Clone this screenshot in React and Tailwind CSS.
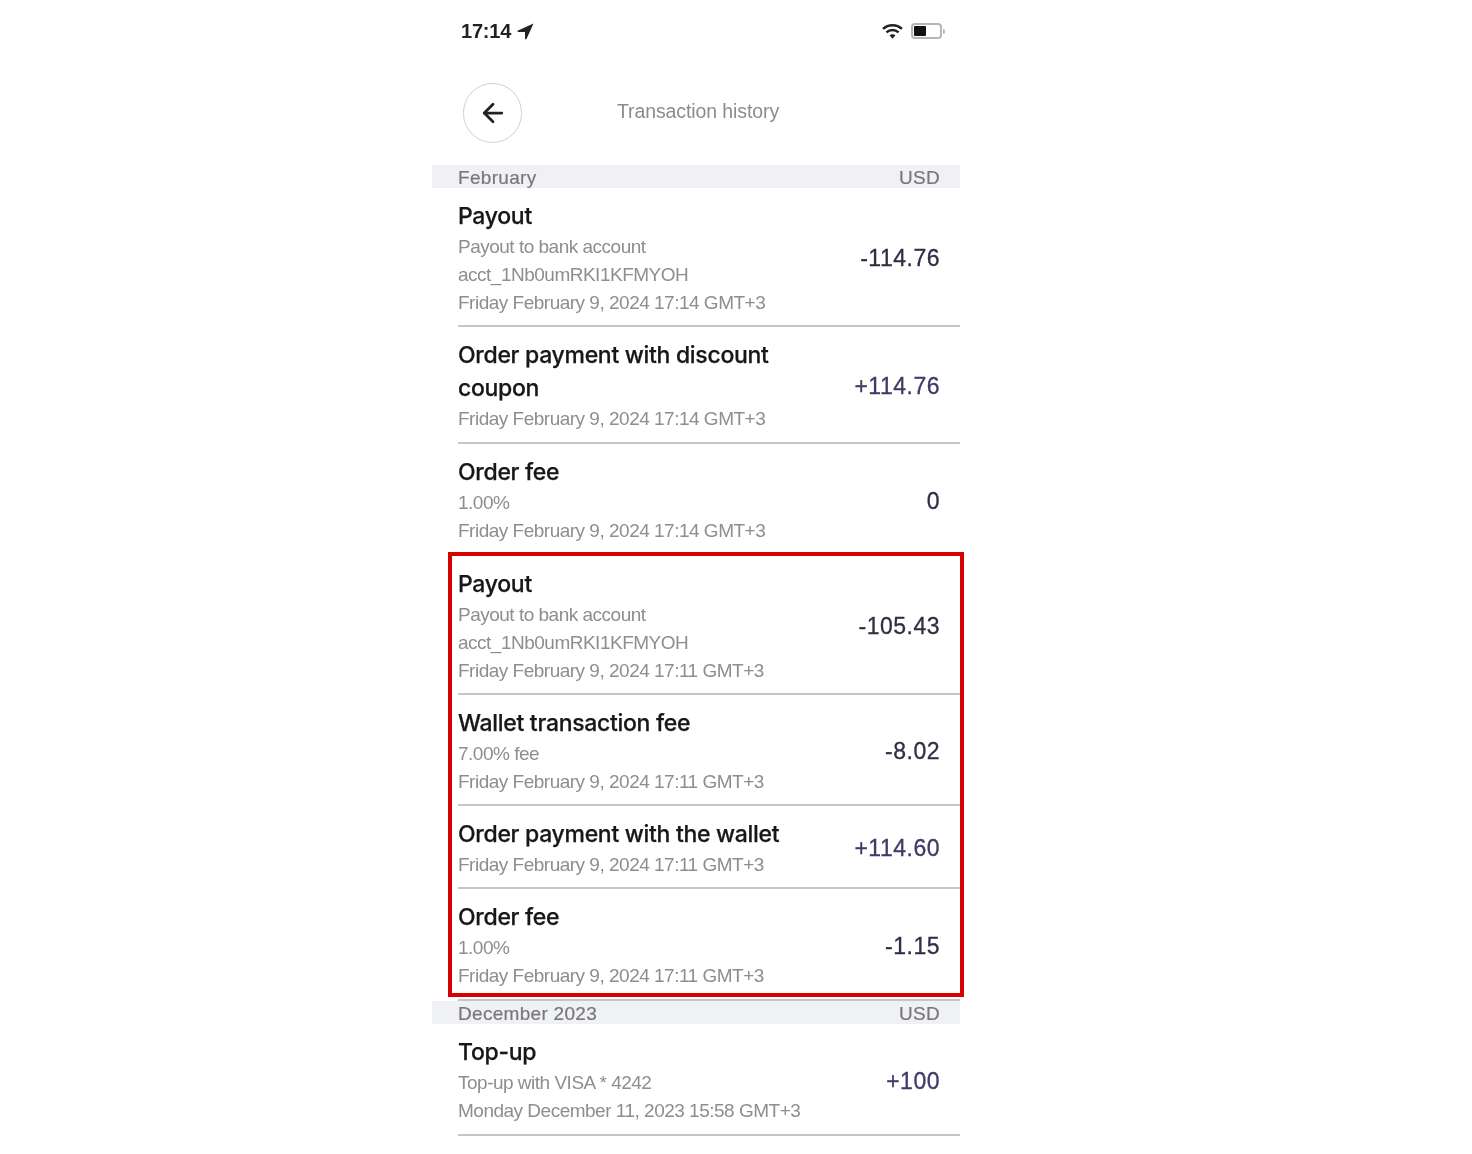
import React from 'react';
import { ArrowLeft } from 'lucide-react';

const Row = ({ height, title, lines, amount, positive }) => (
  <div className={`pl-[26px] ${height}`}>
    <div className="h-full flex items-center pr-5 border-b-2 border-[#c6c6c9]">
      <div className="flex-1 pt-[12px] self-start">
        <div className="text-[23px] leading-[33px] font-medium text-[#17171a] tracking-[-0.3px] max-w-[330px] [-webkit-text-stroke:0.25px]" style={{ fontFamily: 'Inter, sans-serif' }}>{title}</div>
        {lines.map((line) => (
          <div key={line} className="text-[19px] leading-[28px] text-[#8d8d92] tracking-[-0.5px]">{line}</div>
        ))}
      </div>
      <div className={`text-[23px] pt-[4px] tracking-[0.5px] [-webkit-text-stroke:0.3px] ${positive ? 'text-[#3f3a66]' : 'text-[#2f2e45]'}`}>{amount}</div>
    </div>
  </div>
);

const Band = ({ label }) => (
  <div className="h-[23px] bg-[#f0f1f5] flex items-center justify-between pl-[26px] pr-5 pt-[3px] text-[19px] text-[#77777d] tracking-[0.3px] [-webkit-text-stroke:0.2px]">
    <span>{label}</span>
    <span>USD</span>
  </div>
);

export default function App() {
  return (
    <div className="min-h-[1154px] bg-white pl-[432px]" style={{ fontFamily: '"Liberation Sans", sans-serif' }}>
      <div className="relative w-[528px]">
        <div className="blur-[0.5px]">
          <div className="h-[62px] flex items-center justify-between pl-[29px] pr-[15px]">
            <div className="flex items-center gap-[6px] text-[20px] font-semibold text-[#222] tracking-[-0.2px]">
              17:14
              <svg width="17" height="17" viewBox="0 0 17 17" className="text-[#222]">
                <path d="M16.5 0.5 L0.5 7.8 Q0 9 1.5 9 L8 9 L8 15.5 Q8.5 17 9.5 16 Z" fill="currentColor" />
              </svg>
            </div>
            <div className="flex items-center gap-[8px]">
              <svg width="21" height="16" viewBox="0 0 20 15" fill="none" stroke="#222" strokeWidth="2.4">
                <path d="M1 5.5 C6 0.8 14 0.8 19 5.5" />
                <path d="M4.2 8.8 C7.6 5.8 12.4 5.8 15.8 8.8" />
                <path d="M10 14.8 L7.2 11.6 C8.8 10.4 11.2 10.4 12.8 11.6 Z" fill="#222" stroke="none" />
              </svg>
              <div className="flex items-center">
                <div className="w-[31px] h-[16px] rounded-[4px] border-2 border-[#b5b5b8] p-[1px]">
                  <div className="w-[12px] h-full bg-[#111] rounded-[1px]" />
                </div>
                <div className="w-[2px] h-[5px] bg-[#b5b5b8] ml-[1px] rounded-r-sm" />
              </div>
            </div>
          </div>

          <div className="h-[103px] relative flex items-start pl-[31px] pt-[21px]">
            <div className="w-[59px] h-[60px] rounded-full border border-[#cfcfcf] flex items-center justify-center text-[#222]">
              <ArrowLeft size={30} strokeWidth={2.2} />
            </div>
            <div className="absolute left-0 right-[-4px] top-[35px] text-center text-[19.5px] leading-[28px] text-[#8c8c90] tracking-[-0.1px]">Transaction history</div>
          </div>

          <Band label="February" />
          <Row height="h-[139px]" title="Payout" lines={['Payout to bank account', 'acct_1Nb0umRKI1KFMYOH', 'Friday February 9, 2024 17:14 GMT+3']} amount="-114.76" />
          <Row height="h-[117px]" title="Order payment with discount coupon" lines={['Friday February 9, 2024 17:14 GMT+3']} amount="+114.76" positive />
          <Row height="h-[112px]" title="Order fee" lines={['1.00%', 'Friday February 9, 2024 17:14 GMT+3']} amount="0" />
          <Row height="h-[139px]" title="Payout" lines={['Payout to bank account', 'acct_1Nb0umRKI1KFMYOH', 'Friday February 9, 2024 17:11 GMT+3']} amount="-105.43" />
          <Row height="h-[111px]" title="Wallet transaction fee" lines={['7.00% fee', 'Friday February 9, 2024 17:11 GMT+3']} amount="-8.02" />
          <Row height="h-[83px]" title="Order payment with the wallet" lines={['Friday February 9, 2024 17:11 GMT+3']} amount="+114.60" positive />
          <Row height="h-[112px]" title="Order fee" lines={['1.00%', 'Friday February 9, 2024 17:11 GMT+3']} amount="-1.15" />
          <Band label="December 2023" />
          <Row height="h-[112px]" title="Top-up" lines={['Top-up with VISA * 4242', 'Monday December 11, 2023 15:58 GMT+3']} amount="+100" positive />
        </div>

        <div className="absolute left-[16px] top-[552px] w-[516px] h-[445px] border-4 border-[#d90000]" />
      </div>
    </div>
  );
}
